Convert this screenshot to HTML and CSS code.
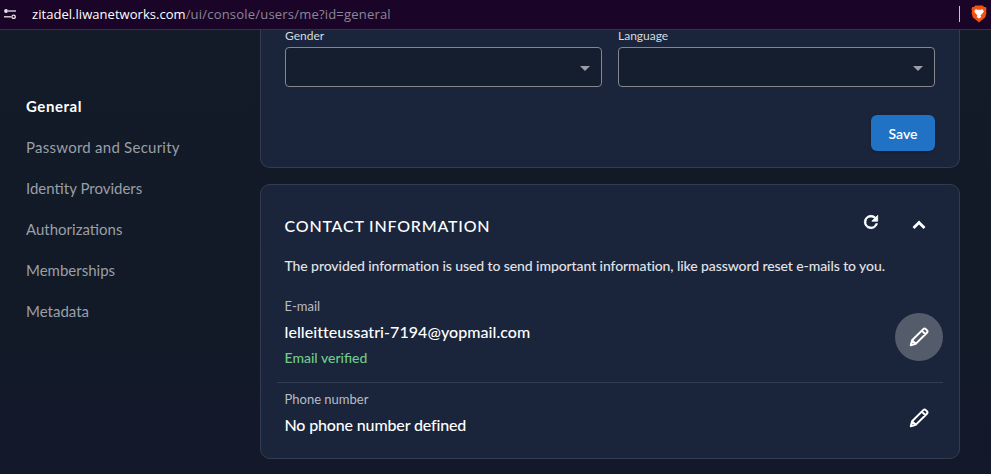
FILE: index.html
```html
<!DOCTYPE html>
<html lang="en">
<head>
<meta charset="utf-8">
<title>Zitadel console</title>
<link rel="stylesheet" href="styles.css">
</head>
<body>
<div class="urlbar">
  <svg class="tune" viewBox="0 0 12 10" width="12" height="10"><g fill="none" stroke="#e8e4ea" stroke-width="1.300"><circle cx="2" cy="2" r="1.900" fill="#e8e4ea" stroke="none"/><path d="M4 2h8"/><path d="M0 7.800h7"/><circle cx="9.600" cy="7.800" r="1.700"/></g></svg>
  <div class="url"><span class="host">zitadel.liwanetworks.com</span><span class="path">/ui/console/users/me?id=general</span></div>
  <span class="sep"></span>
  <svg class="brave" viewBox="0 0 18 20" width="16" height="18"><path d="M5 .5h8l1.800 1.500 1.700.2 1 2.300-.6 2.300.5 1.700-1.500 5.400-3 2.300L9 19.500l-3.900-3.300-3-2.300L.6 8.500l.5-1.700-.6-2.300 1-2.300 1.700-.2z" fill="#f5500f"/><path d="M5.500 4.500 7 5.200h4l1.500-.7 2 2.500-1 1.600-1.800 2-1 1.200.9 1.500L9 15 6.400 13.300l.9-1.500-1-1.200-1.800-2-1-1.600z" fill="#fff"/></svg>
</div>
<div class="page">
  <nav class="side">
    <a class="item active">General</a>
    <a class="item wide">Password and Security</a>
    <a class="item">Identity Providers</a>
    <a class="item">Authorizations</a>
    <a class="item">Memberships</a>
    <a class="item">Metadata</a>
  </nav>
  <main class="main">
    <section class="card first">
      <div class="fields">
        <div class="field"><label class="flabel">Gender</label><div class="select"><span class="arrow"></span></div></div>
        <div class="field"><label class="flabel">Language</label><div class="select"><span class="arrow"></span></div></div>
      </div>
      <div class="actions"><button class="save">Save</button></div>
    </section>
    <section class="card second">
      <div class="head">
        <h2 class="title">CONTACT INFORMATION</h2>
        <svg class="refresh" viewBox="0 0 24 24" width="20" height="20"><path fill="#fff" stroke="#fff" stroke-width="1" d="M17.650 6.350A7.960 7.960 0 0 0 12 4a8 8 0 1 0 7.730 10h-2.080A6 6 0 1 1 12 6c1.660 0 3.140.69 4.220 1.780L13 11h7V4z"/></svg>
        <svg class="chev" viewBox="0 0 24 24" width="24" height="24"><path fill="none" stroke="#fff" stroke-width="2.800" d="M6.500 15 12 9.500l5.500 5.500"/></svg>
      </div>
      <p class="desc">The provided information is used to send important information, like password reset e-mails to you.</p>
      <div class="row email">
        <div class="info">
          <div class="rlabel">E-mail</div>
          <div class="value wider">lelleitteussatri-7194@yopmail.com</div>
          <div class="ok">Email verified</div>
        </div>
        <div class="editbtn hover"><svg viewBox="0 0 24 24" width="24" height="24"><path fill="none" stroke="#fff" stroke-width="2" stroke-linejoin="round" d="M3.800 20.200l1.300-4.900L16.300 4.100a1.800 1.800 0 0 1 2.500 0l1.100 1.100a1.800 1.800 0 0 1 0 2.500L8.700 18.900zM14.800 5.600l3.600 3.600M5.100 15.300l3.600 3.600"/></svg></div>
      </div>
      <div class="row phone">
        <div class="info">
          <div class="rlabel">Phone number</div>
          <div class="value tight">No phone number defined</div>
        </div>
        <div class="editbtn"><svg viewBox="0 0 24 24" width="24" height="24"><path fill="none" stroke="#fff" stroke-width="2" stroke-linejoin="round" d="M3.800 20.200l1.300-4.900L16.300 4.100a1.800 1.800 0 0 1 2.500 0l1.100 1.100a1.800 1.800 0 0 1 0 2.500L8.700 18.900zM14.800 5.600l3.600 3.600M5.100 15.300l3.600 3.600"/></svg></div>
      </div>
    </section>
  </main>
</div>
</body>
</html>
```
FILE: styles.css
```css
* { box-sizing: border-box; }
html, body { margin: 0; height: 100%; }
body {
  width: 991px;
  height: 474px;
  overflow: hidden;
  background: #121a27;
  font-family: Lato, "Liberation Sans", sans-serif;
  color: #fff;
  display: flex;
  flex-direction: column;
}
.urlbar {
  height: 30px;
  flex: none;
  background: #1a0529;
  border-bottom: 1px solid #3c2a5c;
  display: flex;
  align-items: center;
  padding: 0 4px 1px 4px;
}
.tune { flex: none; margin-right: 16px; }
.url {
  flex: 1;
  font-family: "Open Sans", "Noto Sans", sans-serif;
  font-size: 13px;
  white-space: nowrap;
}
.host { color: #fff; letter-spacing: .04px; }
.path { color: #8d8598; letter-spacing: .2px; }
.sep { width: 1px; height: 16px; background: #c9c3cf; margin-right: 11px; }
.brave { flex: none; }
.page {
  flex: 1;
  display: flex;
  min-height: 0;
  background: linear-gradient(180deg, #121b27 0%, #121a27 60%, #13182a 100%);
}
.side {
  width: 260px;
  flex: none;
  padding: 66px 0 0 26px;
  display: flex;
  flex-direction: column;
  gap: 21px;
}
.item { font-size: 15px; line-height: 20px; color: #9a9fa8; }
.item.wide { letter-spacing: .25px; }
.item.active { color: #fff; font-weight: 700; letter-spacing: .55px; }
.main { width: 700px; flex: none; display: flex; flex-direction: column; gap: 16px; }
.card {
  background: #1a253c;
  border: 1px solid #323d52;
  border-radius: 10px;
}
.first {
  height: 138px;
  flex: none;
  border-top: 0;
  border-top-left-radius: 0;
  border-top-right-radius: 0;
  padding: 0 24px;
}
.fields { display: flex; gap: 16px; }
.field { width: 317px; }
.flabel { display: block; font-size: 12px; line-height: 12px; color: #d8dade; margin-bottom: 5px; }
.select {
  height: 40px;
  background: #141e2e;
  border: 1px solid #84878f;
  border-radius: 4px;
  position: relative;
}
.arrow {
  position: absolute;
  right: 11px;
  top: 18px;
  border-left: 5px solid transparent;
  border-right: 5px solid transparent;
  border-top: 5px solid #9b9ea6;
}
.actions { display: flex; justify-content: flex-end; margin-top: 28px; }
.save {
  width: 64px;
  height: 36px;
  border: 0;
  border-radius: 6px;
  background: #2073c4;
  color: #fff;
  font-family: Lato, sans-serif;
  font-size: 14px;
  font-weight: 600;
  box-shadow: 0 1px 3px rgba(0,0,0,.25);
}
.second {
  height: 275px;
  flex: none;
  padding: 0 16px;
}
.head { display: flex; align-items: center; height: 80px; padding: 0 0 0 7.5px; }
.title { flex: 1; margin: 0; font-size: 16px; font-weight: 500; letter-spacing: .8px; color: #fff; }
.refresh { flex: none; margin-right: 26px; margin-top: -7px; }
.chev { flex: none; margin-right: 12px; }
.desc { margin: -8px 0 0 7.5px; font-size: 14px; letter-spacing: -.085px; line-height: 18px; color: #e1e3e6; white-space: nowrap; font-weight: 500; }
.row { display: flex; justify-content: space-between; align-items: flex-start; }
.email { height: 85px; margin-top: 23px; padding-left: 7.5px; border-bottom: 1px solid #323d50; }
.phone { padding-left: 7.5px; padding-top: 8px; }
.rlabel { font-size: 13px; line-height: 16px; color: #b9bcc3; }
.value { font-size: 16px; line-height: 20px; font-weight: 500; color: #fff; margin-top: 8px; }
.value.wider { letter-spacing: .06px; }
.value.tight { letter-spacing: -.15px; }
.ok { font-size: 14px; line-height: 16px; color: #6fcb86; margin-top: 8px; font-weight: 500; }
.editbtn { width: 48px; height: 48px; border-radius: 50%; display: flex; align-items: center; justify-content: center; flex: none; }
.email .editbtn { margin-top: 15px; }
.phone .editbtn { margin-top: 3px; }
.hover { background: #545c6c; }
```
